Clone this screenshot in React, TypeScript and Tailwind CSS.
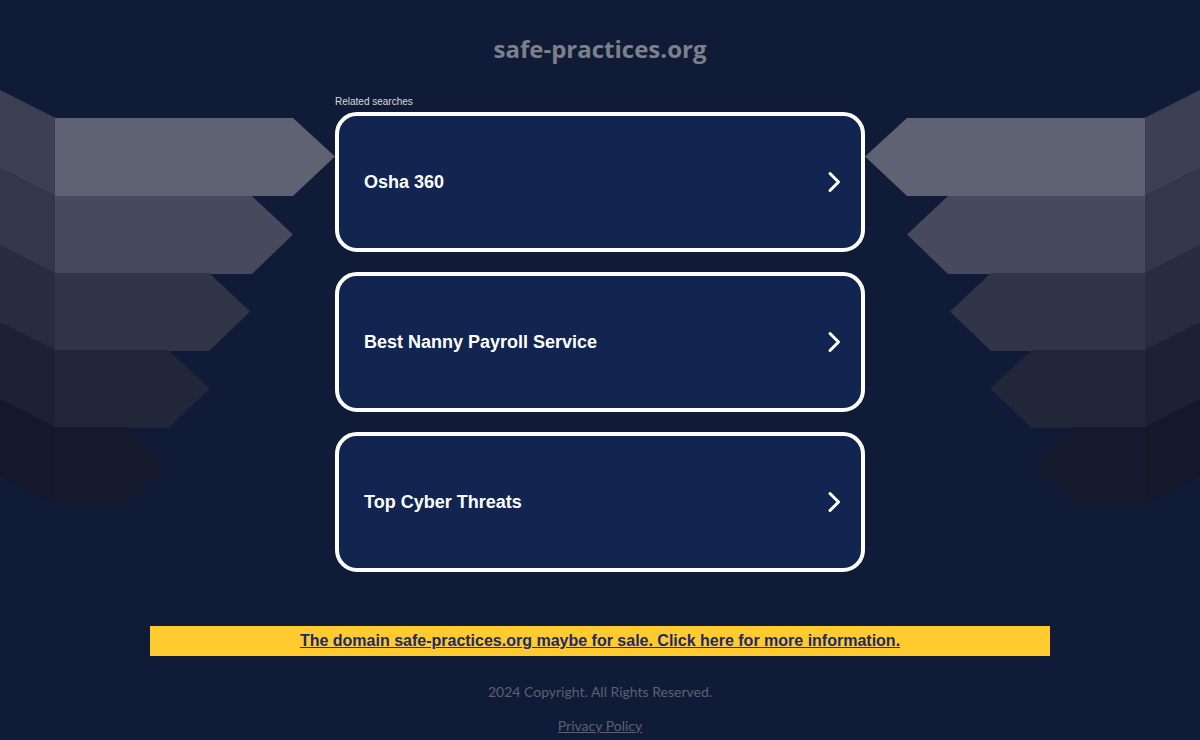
import React from "react";

const searches = ["Osha 360", "Best Nanny Payroll Service", "Top Cyber Threats"];

// stacked arrow bands: top y, rect end, tip x, colour, side colour
const bands = [
  { y: 118, end: 293, tip: 335, fill: "#5f6272", side: "#3d4052" },
  { y: 196, end: 252, tip: 293, fill: "#464a5c", side: "#33374a" },
  { y: 273, end: 209, tip: 250, fill: "#303547", side: "#282c3f" },
  { y: 350, end: 168, tip: 210, fill: "#222639", side: "#1d2134" },
  { y: 427, end: 127, tip: 168, fill: "#151a2e", side: "#13182b" },
];
const H = 77;

const Backdrop = () => (
  <svg
    className="absolute left-0 top-0 pointer-events-none"
    width="1200"
    height="740"
    viewBox="0 0 1200 740"
  >
    {[false, true].map((mirror) => (
      <g key={String(mirror)} transform={mirror ? "translate(1200 0) scale(-1 1)" : undefined}>
        {bands.map((b, i) => {
          // +1 so the next band covers the seam
          const bot = b.y + H + 1;
          const mid = b.y + H / 2;
          return (
            <g key={i}>
              <polygon
                points={`0,${b.y - 28} 55.5,${b.y} 55.5,${bot} 0,${bot - 28}`}
                fill={b.side}
              />
              <polygon
                points={`55,${b.y} ${b.end},${b.y} ${b.tip},${mid} ${b.end},${bot} 55,${bot}`}
                fill={b.fill}
              />
            </g>
          );
        })}
      </g>
    ))}
  </svg>
);

const Chevron = () => (
  <svg width="14" height="22" viewBox="0 0 14 22" fill="none">
    <path d="M3 2.5 L11.5 11 L3 19.5" stroke="#fff" strokeWidth="3" strokeLinecap="round" strokeLinejoin="round" />
  </svg>
);

export default function App() {
  return (
    <div className="relative min-h-[740px] overflow-hidden bg-[#101c37]">
      <Backdrop />
      <div className="relative flex flex-col items-center">
        <h1
          className="mt-[33px] h-[32px] leading-[32px] text-[24px] font-bold text-[#7c808b]"
          style={{ fontFamily: "'Open Sans', 'Noto Sans', sans-serif" }}
        >
          safe-practices.org
        </h1>

        <div className="mt-[32px] w-[530px]">
          <p className="text-[10px] leading-[10px] text-[#d8d8dc] font-['Liberation_Sans',Arial,sans-serif]">
            Related searches
          </p>
          <div className="mt-[5px] flex flex-col gap-5">
            {searches.map((s) => (
              <a
                key={s}
                href="#"
                className="flex h-[140px] items-center justify-between rounded-[22px] border-4 border-white bg-[#112550] pl-[25px] pr-[20px]"
              >
                <span className="text-[18px] font-bold text-white font-['Liberation_Sans',Arial,sans-serif]">
                  {s}
                </span>
                <Chevron />
              </a>
            ))}
          </div>
        </div>

        <div className="mt-[54px] flex h-[30px] w-[900px] items-center justify-center bg-[#ffcb2f]">
          <a
            href="#"
            className="text-[16px] font-bold text-[#1b2a6b] underline font-['Liberation_Sans',Arial,sans-serif]"
          >
            The domain safe-practices.org maybe for sale. Click here for more information.
          </a>
        </div>

        <p className="mt-[26px] h-[20px] leading-[20px] text-[14px] text-[#5b6170] font-['Lato','Open_Sans',sans-serif]">
          2024 Copyright. All Rights Reserved.
        </p>
        <a
          href="#"
          className="mt-[14px] h-[20px] leading-[20px] text-[14px] text-[#5b6170] underline font-['Lato','Open_Sans',sans-serif]"
        >
          Privacy Policy
        </a>
      </div>
    </div>
  );
}
